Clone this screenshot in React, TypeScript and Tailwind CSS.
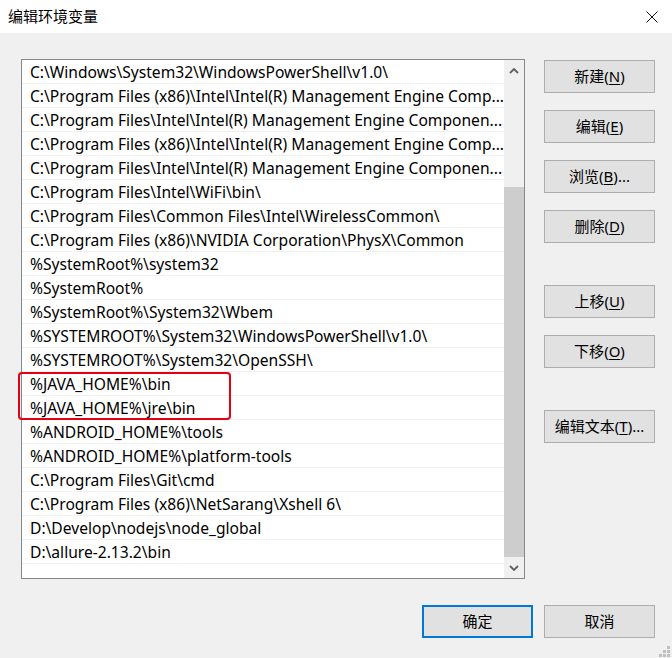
import React from "react";

const paths = [
  "C:\\Windows\\System32\\WindowsPowerShell\\v1.0\\",
  "C:\\Program Files (x86)\\Intel\\Intel(R) Management Engine Comp...",
  "C:\\Program Files\\Intel\\Intel(R) Management Engine Componen...",
  "C:\\Program Files (x86)\\Intel\\Intel(R) Management Engine Comp...",
  "C:\\Program Files\\Intel\\Intel(R) Management Engine Componen...",
  "C:\\Program Files\\Intel\\WiFi\\bin\\",
  "C:\\Program Files\\Common Files\\Intel\\WirelessCommon\\",
  "C:\\Program Files (x86)\\NVIDIA Corporation\\PhysX\\Common",
  "%SystemRoot%\\system32",
  "%SystemRoot%",
  "%SystemRoot%\\System32\\Wbem",
  "%SYSTEMROOT%\\System32\\WindowsPowerShell\\v1.0\\",
  "%SYSTEMROOT%\\System32\\OpenSSH\\",
  "%JAVA_HOME%\\bin",
  "%JAVA_HOME%\\jre\\bin",
  "%ANDROID_HOME%\\tools",
  "%ANDROID_HOME%\\platform-tools",
  "C:\\Program Files\\Git\\cmd",
  "C:\\Program Files (x86)\\NetSarang\\Xshell 6\\",
  "D:\\Develop\\nodejs\\node_global",
  "D:\\allure-2.13.2\\bin",
];

const font = { fontFamily: '"Segoe UI", "Noto Sans", "Noto Sans CJK SC", sans-serif' };

const Btn = ({ label, hot, rest = "", className = "" }: { label: string; hot?: string; rest?: string; className?: string }) => (
  <button className={`w-[111px] h-[33px] bg-[#e1e1e1] border border-[#adadad] text-[15px] text-black flex items-center justify-center ${className}`}>
    {label}
    {hot && (
      <>
        (<span className="underline underline-offset-2">{hot}</span>){rest}
      </>
    )}
  </button>
);

const Chevron = ({ down }: { down?: boolean }) => (
  <svg width="10" height="6" viewBox="0 0 10 6" className={down ? "rotate-180" : ""}>
    <path d="M1 5 L5 1 L9 5" fill="none" stroke="#606060" strokeWidth="1.8" />
  </svg>
);

export default function App() {
  return (
    <div className="w-[672px] h-[658px] bg-[#f0f0f0] relative overflow-hidden" style={font}>
      <div className="h-[33px] bg-white flex items-center justify-between pl-[8px] pr-[14px]">
        <span className="text-[15px] text-black">编辑环境变量</span>
        <svg width="12" height="12" viewBox="0 0 12 12">
          <path d="M0.5 0.5 L11.5 11.5 M11.5 0.5 L0.5 11.5" stroke="#111" strokeWidth="1" />
        </svg>
      </div>

      <div className="flex pl-[21px] pt-[26px]">
        <div className="relative w-[504px] h-[520px] border border-[#828790] bg-white flex">
          <div className="flex-1 flex flex-col">
            {paths.map((p, i) => (
              <div key={i} className="h-[24px] border-b border-[#f0f0f0] pl-[8px] pt-[2px] flex items-center text-[15.6px] text-black whitespace-nowrap overflow-hidden">
                {p}
              </div>
            ))}
          </div>
          <div className="w-[21px] bg-[#f0f0f0] flex flex-col">
            <div className="h-[21px] flex items-center justify-center">
              <Chevron />
            </div>
            <div className="flex-1 flex flex-col">
              <div className="h-[106px]" />
              <div className="flex-1 bg-[#cdcdcd]" />
            </div>
            <div className="h-[21px] flex items-center justify-center">
              <Chevron down />
            </div>
          </div>
          <div className="absolute left-[-4px] top-[312px] w-[213px] h-[48px] border-2 border-[#e60012] rounded-[4px]" />
        </div>

        <div className="ml-[19px] pt-[1px] flex flex-col">
          <Btn label="新建" hot="N" />
          <Btn label="编辑" hot="E" className="mt-[17px]" />
          <Btn label="浏览" hot="B" rest="..." className="mt-[17px]" />
          <Btn label="删除" hot="D" className="mt-[17px]" />
          <Btn label="上移" hot="U" className="mt-[42px]" />
          <Btn label="下移" hot="O" className="mt-[17px]" />
          <Btn label="编辑文本" hot="T" rest="..." className="mt-[42px]" />
        </div>
      </div>

      <div className="flex justify-end gap-[11px] pr-[17px] mt-[26px]">
        <button className="w-[111px] h-[33px] bg-[#e1e1e1] border-2 border-[#0078d7] text-[15px] text-black">确定</button>
        <button className="w-[111px] h-[33px] bg-[#e1e1e1] border border-[#adadad] text-[15px] text-black">取消</button>
      </div>

      <div className="absolute right-[2px] bottom-[1px] grid grid-cols-3 gap-[1px]">
        {[0, 0, 1, 0, 1, 1, 1, 1, 1].map((v, i) => (
          <div key={i} className={`w-[3px] h-[3px] ${v ? "bg-[#bfbfbf]" : ""}`} />
        ))}
      </div>
    </div>
  );
}
